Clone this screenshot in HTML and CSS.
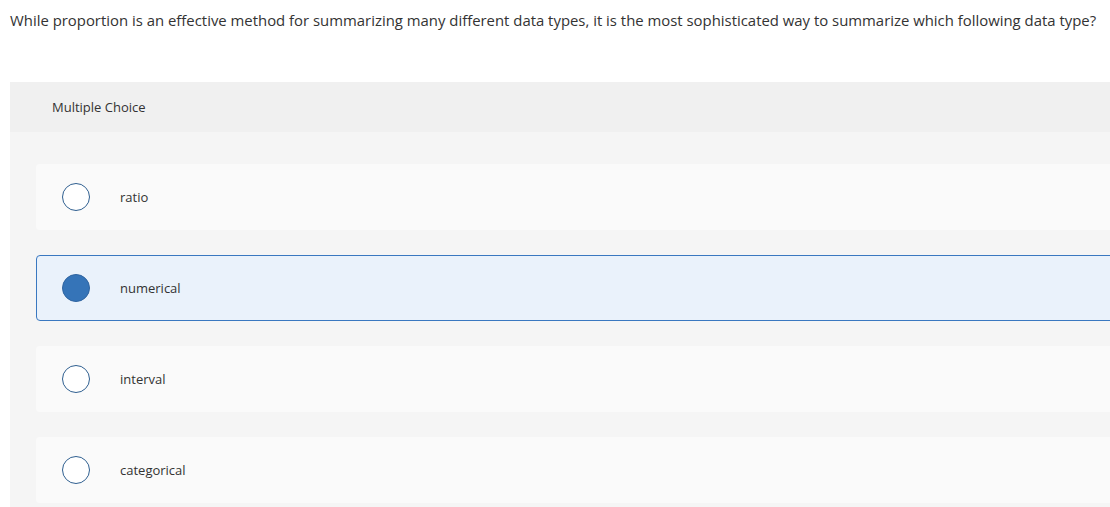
FILE: index.html
```html
<!DOCTYPE html>
<html lang="en">
<head>
  <meta charset="UTF-8" />
  <meta name="viewport" content="width=device-width, initial-scale=1.0" />
  <title>Multiple Choice</title>
  <link rel="stylesheet" href="styles.css">
</head>
<body>
  <div class="question">While proportion is an effective method for summarizing many different data types, it is the most sophisticated way to summarize which following data type?</div>

  <div class="panel">
    <div class="panel-header">Multiple Choice</div>
    <div class="panel-body">
      <div class="option">
        <span class="radio"></span>
        <span class="label">ratio</span>
      </div>
      <div class="option selected">
        <span class="radio"></span>
        <span class="label">numerical</span>
      </div>
      <div class="option">
        <span class="radio"></span>
        <span class="label">interval</span>
      </div>
      <div class="option">
        <span class="radio"></span>
        <span class="label">categorical</span>
      </div>
    </div>
  </div>
</body>
</html>
```

FILE: styles.css
```css
body {
  margin: 0;
  padding: 0 10px;
  overflow: hidden;
  background-color: #fff;
  font-family: 'Open Sans', 'Lato', sans-serif;
  color: #333;
}

.question {
  font-size: 14.9px;
  line-height: 20px;
  margin-top: 10px;
  white-space: nowrap;
}

.panel {
  margin-top: 52px;
  width: 1130px;
}

.panel-header {
  background-color: #f0f0f0;
  height: 50px;
  line-height: 50px;
  padding-left: 42px;
  font-size: 13px;
}

.panel-body {
  background-color: #f5f5f5;
  padding: 32px 0 4px 26px;
}

.option {
  display: flex;
  align-items: center;
  height: 66px;
  box-sizing: border-box;
  margin-bottom: 25px;
  padding-left: 25px;
  background-color: #fafafa;
  border: 1px solid transparent;
  border-radius: 4px 0 0 4px;
}

.option:last-child {
  margin-bottom: 0;
}

.option.selected {
  background-color: #eaf2fb;
  border-color: #3a78c0;
}

.radio {
  width: 28px;
  height: 28px;
  box-sizing: border-box;
  border: 1.5px solid #2f5f90;
  border-radius: 50%;
  background-color: #fff;
  flex-shrink: 0;
}

.option.selected .radio {
  background-color: #3574b8;
  border-color: #2f64a0;
}

.label {
  margin-left: 30px;
  font-size: 13px;
}
```
